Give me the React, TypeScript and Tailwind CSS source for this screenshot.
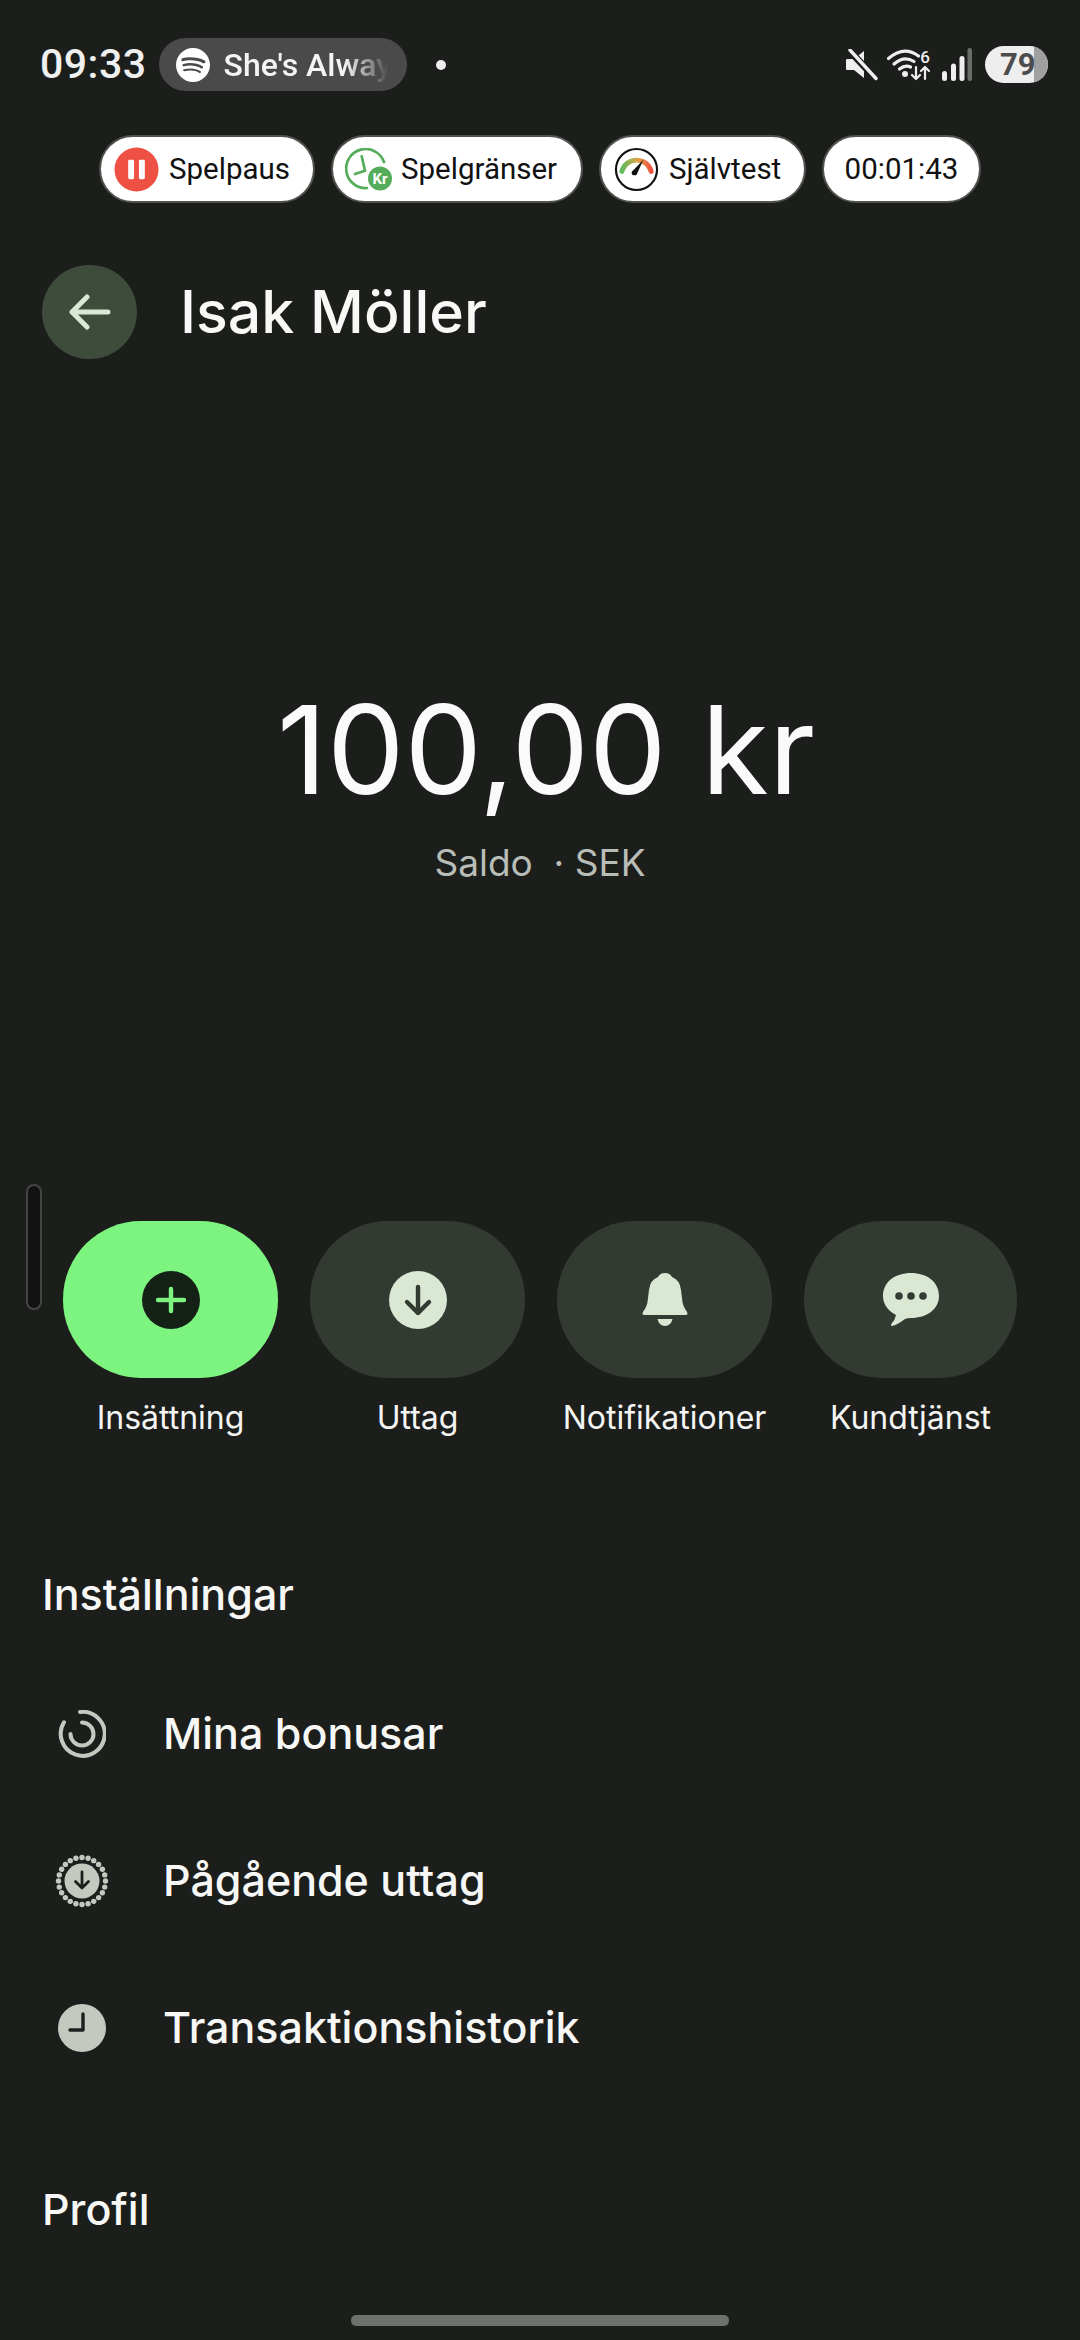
import React from "react";
import { SiSpotify } from "react-icons/si";

function PauseIcon() {
  return (
    <svg width="45" height="45" viewBox="0 0 46 46" className="shrink-0">
      <circle cx="23" cy="23" r="22.5" fill="#ee5143" />
      <rect x="14.5" y="13" width="6" height="20" rx="1.5" fill="#ffffff" />
      <rect x="25.5" y="13" width="6" height="20" rx="1.5" fill="#ffffff" />
    </svg>
  );
}

function LimitIcon() {
  return (
    <svg width="48" height="43" viewBox="0 0 48 43" className="shrink-0">
      <path d="M39 14 A19.5 19.5 0 1 0 22 40" fill="none" stroke="#55ad5b" strokeWidth="2.7" strokeLinecap="round" />
      <path d="M16.7 8.3 L20 22.7 L10 26" fill="none" stroke="#55ad5b" strokeWidth="2.7" strokeLinecap="round" strokeLinejoin="round" />
      <circle cx="35" cy="30.5" r="12" fill="#55ad5b" />
      <text x="35" y="36" textAnchor="middle" fontSize="15" fontWeight="700" fill="#ffffff" fontFamily="Roboto, sans-serif">Kr</text>
    </svg>
  );
}

function GaugeIcon() {
  return (
    <svg width="45" height="45" viewBox="0 0 46 46" className="shrink-0">
      <defs>
        <linearGradient id="gaugeGrad" x1="0" y1="0" x2="1" y2="0">
          <stop offset="0" stopColor="#5fbb5c" />
          <stop offset="0.55" stopColor="#e0a34a" />
          <stop offset="1" stopColor="#ef5140" />
        </linearGradient>
      </defs>
      <circle cx="23" cy="23" r="21" fill="none" stroke="#111111" strokeWidth="2.2" />
      <path d="M8 25 A15.5 15.5 0 0 1 38 25" fill="none" stroke="url(#gaugeGrad)" strokeWidth="5" strokeLinecap="round" />
      <path d="M30 13 L23 28.5 Q19 30 18 27 Q17.5 25 20 23.5 Z" fill="#111111" />
    </svg>
  );
}

function MuteIcon() {
  return (
    <svg width="33" height="32" viewBox="0 0 33 32">
      <path d="M2 10 H9 L19 2 V29 L9 21 H2 Q1 21 1 20 V11 Q1 10 2 10 Z" fill="#eeeeee" />
      <path d="M4 1 L31 30" stroke="#1c1e1c" strokeWidth="7" />
      <path d="M5 1 L31 29.500" stroke="#eeeeee" strokeWidth="3.4" strokeLinecap="round" />
    </svg>
  );
}

function WifiIcon() {
  return (
    <svg width="45" height="33" viewBox="0 0 45 33">
      <path d="M1.500 10.500 Q17 -3 31.500 8" fill="none" stroke="#eeeeee" strokeWidth="3.2" strokeLinecap="round" />
      <path d="M7 16 Q17 7 27 13.500" fill="none" stroke="#eeeeee" strokeWidth="3.2" strokeLinecap="round" />
      <path d="M12.500 21 Q18 16.500 23.500 19" fill="none" stroke="#eeeeee" strokeWidth="3.2" strokeLinecap="round" />
      <circle cx="18" cy="26" r="3" fill="#eeeeee" />
      <path d="M29 19 V31 M25 27 L29 31 L33 27" fill="none" stroke="#eeeeee" strokeWidth="2.2" strokeLinecap="round" strokeLinejoin="round" />
      <path d="M38 31 V19 M34 23 L38 19 L42 23" fill="none" stroke="#eeeeee" strokeWidth="2.2" strokeLinecap="round" strokeLinejoin="round" />
      <text x="38" y="15" textAnchor="middle" fontSize="17" fontWeight="500" fill="#eeeeee" fontFamily="Roboto, sans-serif">6</text>
    </svg>
  );
}

function SignalIcon() {
  return (
    <svg width="30" height="33" viewBox="0 0 30 33">
      <rect x="0" y="23" width="5" height="10" rx="2.500" fill="#eeeeee" />
      <rect x="9" y="15.500" width="5" height="17.500" rx="2.500" fill="#eeeeee" />
      <rect x="17.500" y="8" width="5" height="25" rx="2.500" fill="#eeeeee" />
      <rect x="25.500" y="0" width="4.500" height="33" rx="2.200" fill="#6a6c69" />
    </svg>
  );
}

function PlusIcon() {
  return (
    <svg width="58" height="58" viewBox="0 0 58 58">
      <circle cx="29" cy="29" r="29" fill="#152116" />
      <path d="M29 18 V40 M16 29 H42" stroke="#7ef480" strokeWidth="4.400" strokeLinecap="round" />
    </svg>
  );
}

function DownIcon() {
  return (
    <svg width="58" height="58" viewBox="0 0 58 58">
      <circle cx="29" cy="29" r="29" fill="#d9e7d3" />
      <path d="M29 16 V42 M18 31 L29 42 L40 31" fill="none" stroke="#333a32" strokeWidth="4.400" strokeLinecap="round" strokeLinejoin="round" />
    </svg>
  );
}

function BellIcon() {
  return (
    <svg width="48" height="54" viewBox="0 0 48 54">
      <path d="M24 0 Q29 0 31 4 Q39 7 40 17 L41.500 29 Q42 33 46 39 Q47.500 42 44.500 42 H3.500 Q0.500 42 2 39 Q6 33 6.500 29 L8 17 Q9 7 17 4 Q19 0 24 0 Z" fill="#d9e7d3" />
      <path d="M16.500 46 H31.500 Q30 53 24 53 Q18 53 16.500 46 Z" fill="#d9e7d3" />
    </svg>
  );
}

function ChatIcon() {
  return (
    <svg width="58" height="54" viewBox="0 0 56 54">
      <path d="M28 0 C44 0 56 9 56 23 C56 36 44 45 28 45 Q24.500 45 22 46 Q14 52 9 53 Q7 53 9 50 Q12 47 13 42 C5 38 0 31 0 23 C0 9 12 0 28 0 Z" fill="#d9e7d3" />
      <circle cx="16" cy="23" r="3.800" fill="#333a32" />
      <circle cx="28" cy="23" r="3.800" fill="#333a32" />
      <circle cx="40" cy="23" r="3.800" fill="#333a32" />
    </svg>
  );
}

function BonusIcon() {
  return (
    <svg width="48" height="48" viewBox="0 0 48 48">
      <path d="M22 2 A22 22 0 1 1 6 12.300" fill="none" stroke="#c4c9c0" strokeWidth="4" strokeLinecap="round" />
      <path d="M24 12.500 A11.500 11.500 0 1 1 12.500 24" fill="none" stroke="#c4c9c0" strokeWidth="4" strokeLinecap="round" />
    </svg>
  );
}

function PendingIcon() {
  const dots = Array.from({ length: 24 }, (_, i) => {
    const a = (i / 24) * Math.PI * 2;
    return { x: 27 + 23.5 * Math.cos(a), y: 27 + 23.5 * Math.sin(a) };
  });
  return (
    <svg width="54" height="54" viewBox="0 0 54 54">
      {dots.map((d, i) => (
        <circle key={i} cx={d.x} cy={d.y} r="2.700" fill="#c4c9c0" />
      ))}
      <circle cx="27" cy="27" r="17.500" fill="#c4c9c0" />
      <path d="M27 18 V34 M20.500 27.500 L27 34 L33.500 27.500" fill="none" stroke="#1c1e1c" strokeWidth="2.800" strokeLinecap="round" strokeLinejoin="round" />
    </svg>
  );
}

function ClockIcon() {
  return (
    <svg width="48" height="48" viewBox="0 0 48 48">
      <circle cx="24" cy="24" r="24" fill="#c4c9c0" />
      <path d="M25 10 V26 H12" fill="none" stroke="#1c1e1c" strokeWidth="3.400" strokeLinecap="round" strokeLinejoin="round" />
    </svg>
  );
}

function Chip({ icon, label, className }: { icon?: React.ReactNode; label: string; className: string }) {
  return (
    <div className={`flex h-[68px] items-center rounded-full border-2 border-[#50534e] bg-white font-['Roboto',sans-serif] text-[29.5px] text-[#111111] ${className}`}>
      {icon}
      <span>{label}</span>
    </div>
  );
}

function Action({ icon, label, active, className }: { icon: React.ReactNode; label: string; active?: boolean; className: string }) {
  return (
    <div className={`flex flex-col items-center ${className}`}>
      <div className={`flex h-[157px] w-full items-center justify-center rounded-[78px] ${active ? "bg-[#7ef480]" : "bg-[#333a32]"}`}>
        {icon}
      </div>
      <span className="mt-[20px] whitespace-nowrap text-[32px] leading-[40px] text-[#f4f5f3]">{label}</span>
    </div>
  );
}

function Row({ icon, label }: { icon: React.ReactNode; label: string }) {
  return (
    <div className="flex h-[147px] items-center">
      <div className="flex w-[80px] items-center justify-center">{icon}</div>
      <span className="ml-[41px] text-[43px] font-[550] text-[#f7f7f6]">{label}</span>
    </div>
  );
}

export default function App() {
  return (
    <div className="relative h-[2340px] w-[1080px] overflow-hidden bg-[#1c1e1c] font-['Inter',sans-serif]">
      {/* status bar */}
      <div className="flex h-[135px] items-start pl-[40px] pr-[32px] pt-[38px]">
        <span className="font-['Roboto',sans-serif] text-[41px] font-medium leading-[53px] tracking-[0.5px] text-[#f0f0f0]">09:33</span>
        <div className="ml-[12px] flex h-[53px] w-[248px] items-center rounded-full bg-[#4b4a4b] pl-[17px]">
          <SiSpotify className="text-[34px] text-white" />
          <span className="ml-[14px] whitespace-nowrap font-['Roboto',sans-serif] text-[32px] font-medium text-[#f4f4f4] [mask-image:linear-gradient(to_right,#000_72%,transparent_98%)]">She's Alway</span>
        </div>
        <div className="ml-[29px] mt-[22px] h-[10px] w-[10px] rounded-full bg-[#eeeeee]" />
        <div className="ml-auto mt-[8px] flex items-center">
          <MuteIcon />
          <div className="ml-[9px]"><WifiIcon /></div>
          <div className="ml-[10px]"><SignalIcon /></div>
          <div className="relative ml-[13px] h-[37px] w-[63px] overflow-hidden rounded-full bg-[#eeeeee]">
            <div className="absolute bottom-0 right-0 top-0 w-[14px] bg-[#a0a0a0]" />
            <span className="absolute left-[15px] top-0 font-['Roboto',sans-serif] text-[31px] font-bold leading-[37px] text-[#4d4d50]">79</span>
          </div>
        </div>
      </div>

      {/* chips */}
      <div className="flex items-center pl-[99px]">
        <Chip icon={<PauseIcon />} label="Spelpaus" className="w-[216px] gap-[10px] pl-[13px]" />
        <Chip icon={<LimitIcon />} label="Spelgränser" className="ml-[16px] w-[252px] gap-[8px] pl-[12px]" />
        <Chip icon={<GaugeIcon />} label="Självtest" className="ml-[16px] w-[207px] gap-[10px] pl-[13px]" />
        <Chip label="00:01:43" className="ml-[16px] w-[159px] justify-center" />
      </div>

      {/* header */}
      <div className="mt-[62px] flex items-center pl-[42px]">
        <div className="flex h-[94px] w-[95px] items-center justify-center rounded-full bg-[#3e4c3c]">
          <svg width="42" height="36" viewBox="0 0 42 36">
            <path d="M39 18 H3 M18 3 L3 18 L18 33" fill="none" stroke="#d9e7d3" strokeWidth="5" strokeLinecap="round" strokeLinejoin="round" />
          </svg>
        </div>
        <h1 className="ml-[43px] text-[59px] font-medium leading-[70px] text-[#f8f8f7]">Isak Möller</h1>
      </div>

      {/* balance */}
      <div className="mt-[318px] flex flex-col items-center">
        <div className="pl-[12px] text-[123px] font-normal leading-[146px] text-[#fafafa]">100,00 kr</div>
        <div className="mt-[18px] text-[37px] leading-[44px] text-[#b9bdb7]">Saldo&nbsp; · SEK</div>
      </div>

      {/* actions */}
      <div className="relative mt-[336px] flex pl-[63px]">
        <div className="absolute left-[26px] top-[-37px] h-[126px] w-[16px] rounded-full border-2 border-[#444644] bg-[#111211]" />
        <Action icon={<PlusIcon />} label="Insättning" active className="w-[215px]" />
        <Action icon={<DownIcon />} label="Uttag" className="ml-[32px] w-[215px]" />
        <Action icon={<BellIcon />} label="Notifikationer" className="ml-[32px] w-[215px]" />
        <Action icon={<ChatIcon />} label="Kundtjänst" className="ml-[32px] w-[213px]" />
      </div>

      {/* settings */}
      <h2 className="mt-[130px] pl-[42px] text-[43px] font-[550] leading-[52px] text-[#f7f7f6]">Inställningar</h2>
      <div className="mt-[40px] pl-[42px]">
        <Row icon={<BonusIcon />} label="Mina bonusar" />
        <Row icon={<PendingIcon />} label="Pågående uttag" />
        <Row icon={<ClockIcon />} label="Transaktionshistorik" />
      </div>
      <h2 className="mt-[82px] pl-[42px] text-[43px] font-[550] leading-[52px] text-[#f7f7f6]">Profil</h2>

      {/* home indicator */}
      <div className="absolute bottom-[14px] left-[351px] h-[11px] w-[378px] rounded-[5px] bg-[#6e716c]" />
    </div>
  );
}
